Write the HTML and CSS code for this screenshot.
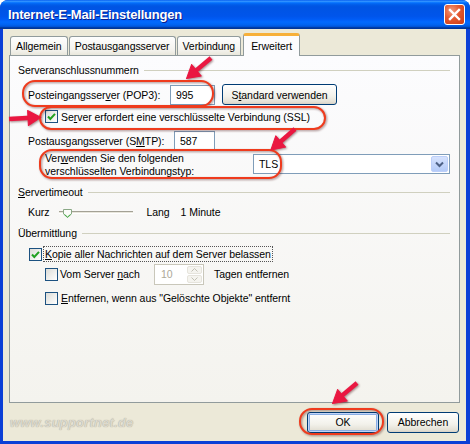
FILE: index.html
```html
<!DOCTYPE html>
<html>
    <head>
        <title>Internet-E-Mail-Einstellungen</title>
        <link rel="stylesheet" href="styles.css">
    </head>
    <body>
        <div class="window">
            <div class="titlebar">
                <span class="title">Internet-E-Mail-Einstellungen</span>
                <span class="close">
                    <svg width="13" height="13" viewBox="0 0 13 13"><path d="M2 2 L11 11 M11 2 L2 11" stroke="#fff" stroke-width="2.4" stroke-linecap="square"/></svg>
                </span>
            </div>
            <div class="client">
                <div class="tabs">
                    <div class="tab">Allgemein</div>
                    <div class="tab">Postausgangsserver</div>
                    <div class="tab">Verbindung</div>
                    <div class="tab active">Erweitert</div>
                </div>
                <div class="panel">
                    <div class="group"><span>Serveranschlussnummern</span></div>

                    <div class="row pop3">
                        <span class="lbl lbl-pop">Posteingangsser<u>v</u>er (POP3):</span>
                        <span class="field f-pop">995</span>
                        <span class="btn btn-std">S<u>t</u>andard verwenden</span>
                    </div>

                    <div class="row ssl">
                        <span class="chk on"><svg width="11" height="11" viewBox="0 0 11 11"><path d="M2 5.5 L4.3 8 L9 2.8" fill="none" stroke="#21a121" stroke-width="2"/></svg></span>
                        <span class="chk-text">Se<u>r</u>ver erfordert eine verschlüsselte Verbindung (SSL)</span>
                    </div>

                    <div class="row smtp">
                        <span class="lbl lbl-smtp">Postausgangsserver (S<u>M</u>TP):</span>
                        <span class="field f-smtp">587</span>
                    </div>

                    <div class="row tls">
                        <span class="lbl lbl-tls">Ver<u>w</u>enden Sie den folgenden<br>verschlüsselten Verbindungstyp:</span>
                        <span class="select">
                            <span class="select-val">TLS</span>
                            <span class="drop"><svg width="9" height="7" viewBox="0 0 9 7"><path d="M1 1.5 L4.5 5 L8 1.5" fill="none" stroke="#4d6185" stroke-width="2"/></svg></span>
                        </span>
                    </div>

                    <div class="group g-timeout"><span><u>S</u>ervertimeout</span></div>

                    <div class="row slider-row">
                        <span class="kurz">Kurz</span>
                        <span class="track">
                            <svg class="thumb" width="11" height="11" viewBox="0 0 11 11"><path d="M1.5 1.5 H9.5 V6 L5.5 9.5 L1.5 6 Z" fill="#fbfbf9" stroke="#8aa886"/><path d="M2.5 6.5 L5.5 9 L8.5 6.5" fill="none" stroke="#3cae3c"/></svg>
                        </span>
                        <span class="lang">Lang</span>
                        <span class="minute">1 Minute</span>
                    </div>

                    <div class="group g-mail"><span>Übermittlung</span></div>

                    <div class="row kopie">
                        <span class="chk on"><svg width="11" height="11" viewBox="0 0 11 11"><path d="M2 5.5 L4.3 8 L9 2.8" fill="none" stroke="#21a121" stroke-width="2"/></svg></span>
                        <span class="chk-text focus"><u>K</u>opie aller Nachrichten auf dem Server belassen</span>
                    </div>

                    <div class="row vom">
                        <span class="chk"></span>
                        <span class="chk-text vom-text">Vom Server <u>n</u>ach</span>
                        <span class="spin">
                            <span class="spin-val">10</span>
                            <span class="spin-btns">
                                <span class="spin-btn"><svg width="7" height="4" viewBox="0 0 7 4"><path d="M0.5 3.5 L3.5 0.5 L6.5 3.5" fill="none" stroke="#c3c1b5"/></svg></span>
                                <span class="spin-btn"><svg width="7" height="4" viewBox="0 0 7 4"><path d="M0.5 0.5 L3.5 3.5 L6.5 0.5" fill="none" stroke="#c3c1b5"/></svg></span>
                            </span>
                        </span>
                        <span class="tagen">Tagen entfernen</span>
                    </div>

                    <div class="row entf">
                        <span class="chk"></span>
                        <span class="chk-text"><u>E</u>ntfernen, wenn aus "Gelöschte Objekte" entfernt</span>
                    </div>
                </div>
                <div class="footer">
                    <span class="watermark">www.supportnet.de</span>
                    <span class="btn btn-ok">OK</span>
                    <span class="btn btn-cancel">Abbrechen</span>
                </div>
            </div>

            <!-- red marks drawn on top of the screenshot -->
            <svg class="marks" width="470" height="444" viewBox="0 0 470 444">
                <g fill="none" stroke="#ef3b1d" stroke-width="2">
                    <rect x="23" y="81" width="190" height="25" rx="12"/>
                    <rect x="40" y="107" width="285" height="22" rx="11"/>
                    <rect x="40" y="150" width="241" height="28" rx="12"/>
                    <rect x="300" y="409" width="83" height="25" rx="12"/>
                </g>
                <g fill="#ea1741" stroke="#ea1741">
                    <g transform="translate(211 58) rotate(140)">
                        <line x1="0" y1="0" x2="22" y2="0" stroke-width="4.5"/>
                        <polygon points="32,0 19,-7.5 19,7.5" stroke-width="1" stroke-linejoin="round"/>
                    </g>
                    <g transform="translate(9 119) rotate(-3)">
                        <line x1="0" y1="0" x2="22" y2="0" stroke-width="4.5"/>
                        <polygon points="32,0 19,-7.5 19,7.5" stroke-width="1" stroke-linejoin="round"/>
                    </g>
                    <g transform="translate(295 129) rotate(139)">
                        <line x1="0" y1="0" x2="22" y2="0" stroke-width="4.5"/>
                        <polygon points="32,0 19,-7.5 19,7.5" stroke-width="1" stroke-linejoin="round"/>
                    </g>
                    <g transform="translate(357 383) rotate(140)">
                        <line x1="0" y1="0" x2="22" y2="0" stroke-width="4.5"/>
                        <polygon points="32,0 19,-7.5 19,7.5" stroke-width="1" stroke-linejoin="round"/>
                    </g>
                </g>
            </svg>
        </div>
    </body>
</html>
```

FILE: styles.css
```css
*{
margin: 0;
padding: 0;
box-sizing: border-box;
}
body{
background: #fff;
font-family: "Liberation Sans", Arial, sans-serif;
font-size: 10.5px;
letter-spacing: -0.05px;
color: #000;
}
.window{
position: relative;
width: 470px;
height: 444px;
display: flex;
flex-direction: column;
background: #0b3fd6;
border-radius: 8px 8px 0 0;
overflow: hidden;
}
.titlebar{
height: 29px;
display: flex;
align-items: center;
padding: 0 5px 0 8px;
background: linear-gradient(to bottom, #0058ee 0%, #3593ff 4%, #288eff 6%, #127dff 8%, #036ffc 10%, #0262ee 14%, #0057e5 20%, #0054e3 24%, #0055eb 56%, #005bf5 66%, #026afe 76%, #0062ef 86%, #0052d6 92%, #0040ab 94%, #003092 100%);
}
.title{
color: #fff;
font-weight: bold;
font-size: 13px;
letter-spacing: -0.2px;
text-shadow: 1px 1px 0 #0a1d8a;
}
.close{
margin-left: auto;
width: 21px;
height: 21px;
display: flex;
align-items: center;
justify-content: center;
border: 1px solid #fff;
border-radius: 3px;
background: radial-gradient(circle at 35% 30%, #f29a7c 0%, #e3582f 45%, #cb3a14 100%);
}
.client{
flex: 1;
display: flex;
flex-direction: column;
margin: 0 4px 3px 3px;
background: #ece9d8;
}

/* tabs */
.tabs{
height: 26px;
display: flex;
align-items: flex-end;
gap: 1px;
padding-left: 7px;
}
.tab{
height: 19px;
padding: 0 5px;
line-height: 18px;
border: 1px solid #919b9c;
border-bottom: none;
border-radius: 3px 3px 0 0;
background: linear-gradient(to bottom, #fefefe, #f4f3ee 70%, #e9e7dc);
white-space: nowrap;
}
.tab.active{
position: relative;
z-index: 1;
height: 23px;
margin-bottom: -1px;
margin-left: 1px;
padding: 0 7px;
line-height: 20px;
background: #fcfcfe;
border-top: 3px solid #f7b03a;
border-radius: 3px 3px 0 0;
}

/* panel */
.panel{
width: 451px;
height: 348px;
margin-left: 6px;
padding: 0 9px 0 8px;
display: flex;
flex-direction: column;
border: 1px solid #919b9c;
background: linear-gradient(to bottom, #fcfcfe, #f4f3ee);
}
.group{
height: 14px;
margin-top: 7px;
display: flex;
align-items: center;
}
.group::after{
content: "";
flex: 1;
height: 1px;
margin-left: 5px;
background: #d0d0bf;
}
.g-timeout{
margin-top: 6px;
}
.g-mail{
margin-top: 6px;
}
.row{
display: flex;
align-items: center;
}
.pop3{
height: 21px;
margin-top: 7px;
padding-left: 10px;
}
.lbl-pop{
width: 142px;
}
.field{
height: 20px;
padding-left: 5px;
line-height: 18px;
background: #fff;
border: 1px solid #7f9db9;
}
.f-pop{
width: 45px;
}
.btn{
display: flex;
align-items: center;
justify-content: center;
border: 1px solid #003c74;
border-radius: 3px;
background: linear-gradient(to bottom, #ffffff, #f2f1ea 60%, #e3e0d5 90%, #d6d0c5);
}
.btn-std{
width: 115px;
height: 21px;
margin-left: 7px;
}
.ssl{
height: 21px;
margin-top: 1px;
padding-left: 27px;
}
.chk{
width: 13px;
height: 13px;
display: flex;
align-items: center;
justify-content: center;
flex-shrink: 0;
border: 1px solid #1c5180;
background: linear-gradient(135deg, #dcdcd7, #ffffff);
}
.chk-text{
margin-left: 3px;
white-space: nowrap;
}
.smtp{
height: 21px;
margin-top: 3px;
padding-left: 10px;
}
.lbl-smtp{
width: 146px;
}
.f-smtp{
width: 41px;
}
.tls{
height: 27px;
margin-top: 1px;
padding-left: 27px;
align-items: flex-start;
}
.lbl-tls{
width: 208px;
line-height: 13px;
}
.select{
width: 197px;
height: 20px;
margin-top: 2px;
display: flex;
align-items: center;
padding: 0 1px 0 5px;
background: #fff;
border: 1px solid #7f9db9;
}
.select-val{
flex: 1;
}
.drop{
width: 17px;
height: 16px;
display: flex;
align-items: center;
justify-content: center;
border: 1px solid #bccff9;
border-radius: 2px;
background: linear-gradient(to bottom, #d6e2fd, #b4cbf8);
}
.slider-row{
height: 16px;
margin-top: 5px;
padding-left: 10px;
}
.track{
width: 74px;
height: 3px;
margin-left: 10px;
display: flex;
align-items: center;
border-top: 1px solid #a3a195;
border-bottom: 1px solid #fff;
background: #e8e6dc;
}
.thumb{
margin-left: 3px;
margin-top: 3px;
}
.lang{
margin-left: 13px;
}
.minute{
margin-left: 11px;
}
.kopie{
height: 18px;
margin-top: 5px;
padding-left: 11px;
}
.focus{
margin-left: 1px;
padding: 1px 1px;
border: 1px dotted #555;
}
.vom{
height: 22px;
padding-left: 27px;
}
.vom-text{
width: 94px;
margin-left: 2px;
}
.spin{
width: 50px;
height: 21px;
display: flex;
align-items: center;
padding: 1px 1px 1px 6px;
border: 1px solid #c9c7ba;
background: #fff;
color: #aca899;
}
.spin-val{
flex: 1;
}
.spin-btns{
width: 15px;
height: 100%;
display: flex;
flex-direction: column;
gap: 1px;
}
.spin-btn{
flex: 1;
display: flex;
align-items: center;
justify-content: center;
border: 1px solid #e6e4dc;
border-radius: 2px;
background: #f5f4ef;
}
.tagen{
margin-left: 10px;
}
.entf{
height: 18px;
margin-top: 4px;
padding-left: 27px;
}

/* footer */
.footer{
flex: 1;
display: flex;
align-items: center;
padding: 0 7px;
}
.watermark{
font-weight: bold;
font-style: italic;
font-size: 13px;
color: #dcd9ce;
text-shadow: 0 0 1px #9d998a;
letter-spacing: 0.2px;
}
.btn-ok{
width: 72px;
height: 21px;
margin-left: auto;
border-color: #003c74;
box-shadow: inset 0 0 0 1px #c2d5f7, inset 0 0 0 2px #89ade4;
}
.btn-cancel{
width: 72px;
height: 21px;
margin-left: 8px;
}
.marks{
position: absolute;
left: 0;
top: 0;
pointer-events: none;
filter: drop-shadow(1px 1px 1px rgba(60, 0, 0, 0.45));
}
```
